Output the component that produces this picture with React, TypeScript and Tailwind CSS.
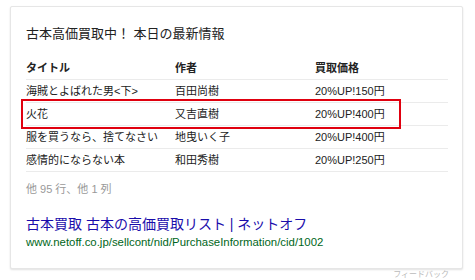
import React from "react";

interface Row {
  title: string;
  author: string;
  price: string;
}

const rows: Row[] = [
  { title: "海賊とよばれた男<下>", author: "百田尚樹", price: "20%UP!150円" },
  { title: "火花", author: "又吉直樹", price: "20%UP!400円" },
  { title: "服を買うなら、捨てなさい", author: "地曳いく子", price: "20%UP!400円" },
  { title: "感情的にならない本", author: "和田秀樹", price: "20%UP!250円" },
];

const font = { fontFamily: '"Liberation Sans", Arial, "Noto Sans CJK JP", sans-serif' };

const App = () => {
  return (
    <div className="w-[475px] h-[280px] overflow-hidden bg-white pt-[6px] pl-[10px]" style={font}>
      <div className="w-[453px] h-[263px] bg-white border border-[#e6e6e6] rounded-[2px] shadow-[0_1px_2px_rgba(0,0,0,0.12)] pl-[15px] pt-[17px]">
        <div className="text-[13px] leading-[20px] text-[#222]">古本高価買取中！ 本日の最新情報</div>

        <div className="relative w-[422px] mt-[13px] text-[11px] text-[#222]">
          <div className="flex h-[23px] items-center border-b border-[#ebebeb] font-bold">
            <div className="w-[149px]">タイトル</div>
            <div className="w-[140px]">作者</div>
            <div className="flex-1">買取価格</div>
          </div>
          {rows.map((row: Row, index: number) => (
            <div key={index} className="flex h-[23px] items-center border-b border-[#ebebeb]">
              <div className="w-[149px]">{row.title}</div>
              <div className="w-[140px]">{row.author}</div>
              <div className="flex-1">{row.price}</div>
            </div>
          ))}
          <div className="absolute left-[-5px] top-[42px] w-[380px] h-[30px] border-2 border-[#e0000f]" />
        </div>

        <div className="mt-[9px] text-[11px] leading-[16px] text-[#999]">他 95 行、他 1 列</div>

        <div className="mt-[18px] text-[14px] leading-[18px] text-[#1a0dab]">古本買取 古本の高価買取リスト | ネットオフ</div>
        <div className="mt-[1px] text-[11.4px] leading-[16px] text-[#006621]">www.netoff.co.jp/sellcont/nid/PurchaseInformation/cid/1002</div>
      </div>
      <div className="w-[453px] flex justify-end pr-[14px] mt-[1px]">
        <span className="text-[8px] leading-[9px] text-[#bbb]">フィードバック</span>
      </div>
    </div>
  );
};

export default App;
